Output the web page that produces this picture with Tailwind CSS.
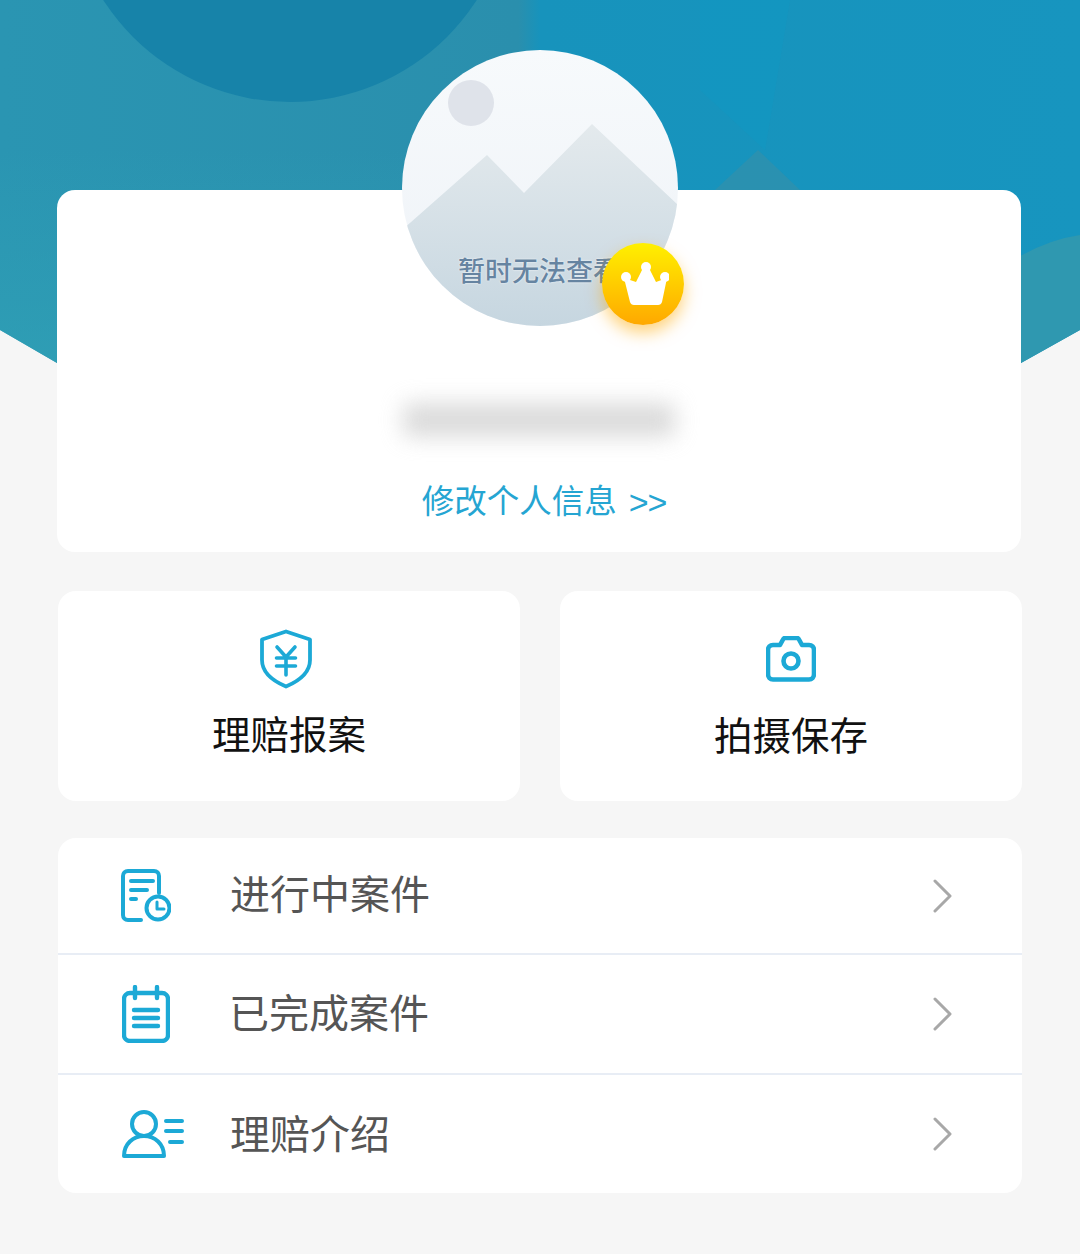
<!DOCTYPE html>
<html lang="zh-CN">
  <head>
    <meta charset="UTF-8" />
    <meta name="viewport" content="width=device-width, initial-scale=1.0" />
    <script src="https://cdn.jsdelivr.net/npm/@tailwindcss/browser@4"></script>
    <title>我的</title>
  </head>
  <body class="bg-[#f6f6f6] font-['Noto_Sans_CJK_SC','Noto_Sans',sans-serif]">
    <div class="relative w-[1080px] h-[1254px] overflow-hidden">
      <!-- header artwork -->
      <svg class="absolute left-0 top-0" width="1080" height="420" viewBox="0 0 1080 420">
        <defs>
          <linearGradient id="heroLeft" x1="0" y1="0" x2="1" y2="0">
            <stop offset="0" stop-color="#2a95b2" />
            <stop offset="0.48" stop-color="#2a8fad" />
            <stop offset="0.5" stop-color="#1793bc" />
            <stop offset="1" stop-color="#1795bf" />
          </linearGradient>
          <linearGradient id="heroFade" x1="0" y1="0" x2="0" y2="1">
            <stop offset="0" stop-color="#2f9fb5" stop-opacity="0" />
            <stop offset="1" stop-color="#2f9fb5" stop-opacity="1" />
          </linearGradient>
        </defs>
        <path d="M0 0H1080V330L1021 363V400H57V363L0 330Z" fill="url(#heroLeft)" />
        <path d="M0 150H540V400H57V363L0 330Z" fill="url(#heroFade)" />
        <circle cx="290" cy="-120" r="222" fill="#1783a9" />
        <path d="M700 0H790L765 150L700 90Z" fill="#0f98c3" opacity="0.45" />
        <path d="M715 190L758 150L800 190Z" fill="#3390ab" opacity="0.7" />
        <path d="M1080 235Q1045 240 1010 262V380H1021V363L1080 330Z" fill="#2f98b0" />
      </svg>

      <div class="relative flex flex-col pt-[190px] pl-[58px] pr-[58px]">
        <!-- profile card -->
        <section class="flex flex-col items-center h-[362px] -ml-px mr-px rounded-[18px] bg-white">
          <div class="mt-[213px] w-[272px] h-[34px] rounded-md bg-[#cfcfcf] blur-[11px] opacity-75"></div>
          <a class="mt-[37px] ml-[10px] flex items-center gap-[12px] text-[32.5px] leading-[44px] text-[#25a5d2]">
            <span>修改个人信息</span><span class="font-['Liberation_Sans',sans-serif] text-[34px] tracking-[-1px] pt-[6px]">&gt;&gt;</span>
          </a>
        </section>

        <!-- shortcuts -->
        <div class="mt-[39px] grid grid-cols-2 gap-[40px]">
          <a class="flex flex-col items-center h-[210px] rounded-[18px] bg-white">
            <svg class="mt-[38px] mr-[7px]" width="54" height="60" viewBox="0 0 54 60" fill="none" stroke="#1ca9d6" stroke-width="3.8" stroke-linecap="round" stroke-linejoin="round">
              <path d="M27 2.5L51 10.5V31C51 43 40 52 27 57.5C14 52 3 43 3 31V10.5Z" />
              <path d="M18 18L27 28L36 18M17.5 29H36.5M17.5 37H36.5M27 28V46" stroke-width="3.6" />
            </svg>
            <span class="mt-[15px] text-[38.5px] leading-[56px] text-[#111]">理赔报案</span>
          </a>
          <a class="flex flex-col items-center h-[210px] rounded-[18px] bg-white">
            <svg class="mt-[45px]" width="50" height="46" viewBox="0 0 50 46" fill="none" stroke="#1ca9d6" stroke-width="4.6" stroke-linejoin="round">
              <path d="M7 9H14L17 3.5C17.5 2.5 18 2 19 2H31C32 2 32.5 2.5 33 3.5L36 9H43C46 9 48 11 48 14V38C48 41 46 43.5 43 43.5H7C4 43.5 2 41 2 38V14C2 11 4 9 7 9Z" />
              <circle cx="25" cy="25" r="7.5" />
            </svg>
            <span class="mt-[23px] text-[38.5px] leading-[56px] text-[#111]">拍摄保存</span>
          </a>
        </div>

        <!-- case list -->
        <ul class="mt-[37px] rounded-[18px] bg-white text-[40px] text-[#555]">
          <li class="flex items-center h-[117px] pl-[63px] pr-[70px] border-b-2 border-[#e8edf5]">
            <svg class="shrink-0" width="50" height="54" viewBox="0 0 50 54" fill="none" stroke="#1ca9d6" stroke-width="4" stroke-linecap="round" stroke-linejoin="round">
              <path d="M20 51H7C4 51 2 49 2 46V7C2 4 4 2 7 2H33C36 2 38 4 38 7V24" />
              <path d="M10 12H32M10 21H26M10 30H15" />
              <circle cx="37" cy="39" r="11.5" />
              <path d="M36 33V40H43" stroke-width="3" />
            </svg>
            <span class="ml-[59px] flex-1 leading-[56px] -mt-[7px]">进行中案件</span>
            <svg width="20" height="34" viewBox="0 0 20 34" fill="none" stroke="#a8a8a8" stroke-width="3" stroke-linecap="round" stroke-linejoin="round"><path d="M3 2L18 17L3 32" /></svg>
          </li>
          <li class="flex items-center h-[120px] pl-[64px] pr-[70px] border-b-2 border-[#e8edf5]">
            <svg class="shrink-0" width="48" height="58" viewBox="0 0 48 58" fill="none" stroke="#1ca9d6" stroke-width="4.4" stroke-linecap="round" stroke-linejoin="round">
              <rect x="2" y="8" width="44" height="48" rx="6" />
              <path d="M13 2V13M35 2V13" />
              <path d="M12 25H36M12 33H36M12 41H36" />
            </svg>
            <span class="ml-[59px] flex-1 leading-[56px] -mt-[6px]">已完成案件</span>
            <svg width="20" height="34" viewBox="0 0 20 34" fill="none" stroke="#a8a8a8" stroke-width="3" stroke-linecap="round" stroke-linejoin="round"><path d="M3 2L18 17L3 32" /></svg>
          </li>
          <li class="flex items-center h-[118px] pl-[64px] pr-[70px]">
            <svg class="shrink-0" width="62" height="48" viewBox="0 0 62 48" fill="none" stroke="#1ca9d6" stroke-width="4" stroke-linecap="round" stroke-linejoin="round">
              <circle cx="22" cy="14" r="12" />
              <path d="M2 46C2 34 11 26 22 26C33 26 42 34 42 46Z" />
              <path d="M44 11H60M44 21H60M48 32H60" />
            </svg>
            <span class="ml-[46px] flex-1 leading-[56px] -mt-[4px]">理赔介绍</span>
            <svg width="20" height="34" viewBox="0 0 20 34" fill="none" stroke="#a8a8a8" stroke-width="3" stroke-linecap="round" stroke-linejoin="round"><path d="M3 2L18 17L3 32" /></svg>
          </li>
        </ul>
      </div>

      <!-- avatar placeholder -->
      <div class="absolute left-[402px] top-[50px] w-[276px] h-[276px] rounded-full overflow-hidden bg-gradient-to-b from-[#f7fafc] to-[#eef2f7]">
        <svg class="absolute inset-0" width="276" height="276" viewBox="0 0 276 276">
          <defs>
            <linearGradient id="mountain" x1="0" y1="0" x2="0" y2="1">
              <stop offset="0" stop-color="#e4eaed" />
              <stop offset="1" stop-color="#c6d6e0" />
            </linearGradient>
          </defs>
          <circle cx="69" cy="53" r="23" fill="#dfe3ea" />
          <path d="M0 180L85 105L122 143L190 74L276 155V276H0Z" fill="url(#mountain)" />
        </svg>
        <span class="absolute left-[56px] top-[201px] whitespace-nowrap text-[27px] font-medium leading-[38px] text-[#6684a1] [text-shadow:0_0_2px_#fff]">暂时无法查看</span>
      </div>

      <!-- vip badge -->
      <div class="absolute left-[602px] top-[243px] flex items-center justify-center w-[82px] h-[82px] rounded-full bg-gradient-to-b from-[#fff000] to-[#ffa800] shadow-[0_8px_16px_rgba(255,170,0,0.5)]">
        <svg class="ml-[3px]" width="48" height="44" viewBox="0 0 48 44" fill="#fff">
          <circle cx="25" cy="5" r="5" />
          <circle cx="5" cy="15" r="5" />
          <circle cx="44" cy="15" r="5" />
          <path d="M3 16L9 40Q10 43 13 43H37Q40 43 41 40L46 16L35 20L29 8H21L15 20Z" />
        </svg>
      </div>
    </div>
  </body>
</html>
